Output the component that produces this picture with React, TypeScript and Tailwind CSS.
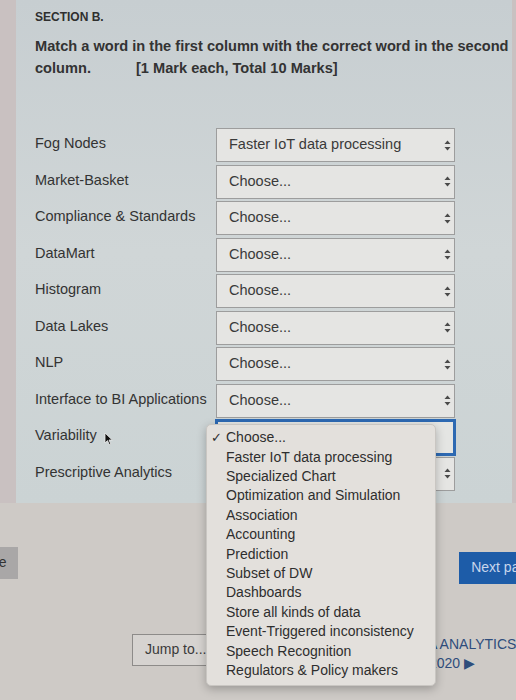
import { ChevronsUpDown } from 'lucide-react';

const ROWS = [
  { label: 'Fog Nodes', value: 'Faster IoT data processing' },
  { label: 'Market-Basket', value: 'Choose...' },
  { label: 'Compliance & Standards', value: 'Choose...' },
  { label: 'DataMart', value: 'Choose...' },
  { label: 'Histogram', value: 'Choose...' },
  { label: 'Data Lakes', value: 'Choose...' },
  { label: 'NLP', value: 'Choose...' },
  { label: 'Interface to BI Applications', value: 'Choose...' },
  { label: 'Variability', value: 'Choose...', focused: true },
  { label: 'Prescriptive Analytics', value: 'Choose...' },
];

const OPTIONS = [
  'Choose...',
  'Faster IoT data processing',
  'Specialized Chart',
  'Optimization and Simulation',
  'Association',
  'Accounting',
  'Prediction',
  'Subset of DW',
  'Dashboards',
  'Store all kinds of data',
  'Event-Triggered inconsistency',
  'Speech Recognition',
  'Regulators & Policy makers',
];

function SelectArrows() {
  return (
    <svg width="7" height="11" viewBox="0 0 7 11" className="shrink-0">
      <path d="M3.5 0.5 L6.5 4 L0.5 4 Z" fill="#4a4a4a" />
      <path d="M3.5 10.5 L6.5 7 L0.5 7 Z" fill="#4a4a4a" />
    </svg>
  );
}

export default function App() {
  return (
    <div
      className="relative h-[700px] w-[516px] overflow-hidden bg-[#cecac6] text-[#333]"
      style={{ fontFamily: '"Liberation Sans", Arial, sans-serif' }}
    >
      <div className="bg-[#c9c1c1]">
        <div className="ml-[16px] w-[496px] bg-gradient-to-b from-[#c7ced1] via-[#d0d6d7] to-[#cbd3d4] px-[19px] pb-[12px] pt-[7px]">
          <p className="text-[12px] font-bold leading-[20px] text-[#2f2f2f]">SECTION B.</p>
          <p className="mt-[8px] whitespace-nowrap text-[14.6px] font-bold leading-[22px] text-[#333]">
            Match a word in the first column with the correct word in the second
            <br />
            <span className="inline-block w-[101px]">column.</span>[1 Mark each, Total 10 Marks]
          </p>

          <div className="mt-[49px] flex flex-col gap-[2.5px]">
            {ROWS.map((row) => (
              <div key={row.label} className="flex items-start">
                <span className="w-[181px] shrink-0 whitespace-nowrap pt-[5px] text-[14.5px] leading-5 text-[#333]">
                  {row.label}
                </span>
                {row.focused ? (
                  <div className="-my-[1.5px] -ml-[1px] flex h-[37px] w-[241px] items-center justify-between border-[3px] border-[#2d69b2] bg-[#e4e5e3] pl-[11px] pr-[4px]" />
                ) : (
                  <div className="flex h-[34px] w-[239px] items-center justify-between border border-[#9d9d9d] bg-[#e5e5e3] pl-[12px] pr-[3px] text-[14.5px] text-[#3a3a3a]">
                    <span className="whitespace-nowrap">{row.value}</span>
                    <SelectArrows />
                  </div>
                )}
              </div>
            ))}
          </div>
        </div>
      </div>

      <div className="mt-[44px] flex items-start">
        <button className="-ml-[95px] h-[32px] shrink-0 bg-[#a9a7a7] pl-[12px] pr-[11px] text-[14px] text-[#333]">
          Previous page
        </button>
        <button className="-mr-[31px] ml-auto mt-[5px] h-[32px] shrink-0 bg-[#1d5ca8] px-[12px] text-[14px] text-[#c8d6ec]">
          Next page
        </button>
      </div>

      <div className="mt-[50px] flex items-start">
        <div className="ml-[132px] flex h-[32px] w-[180px] shrink-0 items-center justify-between border border-[#8d8b89] bg-[#d6d3d0] pl-[12px] pr-[6px] text-[14px] text-[#3a3a3a]">
          <span>Jump to...</span>
          <ChevronsUpDown size={12} />
        </div>
        <div className="ml-[90px] mt-[1px] flex shrink-0 flex-col text-[14px] leading-[19px] text-[#2f4d7c]">
          <span className="whitespace-nowrap">DATA ANALYTICS</span>
          <span className="whitespace-nowrap pl-[27px]">2020 ▶</span>
        </div>
      </div>

      {/* native select popup, open over the Variability field */}
      <div className="absolute left-[206px] top-[424px] w-[230px] rounded-[5px] border border-[#c9c6c2] bg-[#e3e0dc] pb-[5px] pt-[3px] shadow-[0_3px_10px_rgba(0,0,0,0.25)]">
        {OPTIONS.map((opt, i) => (
          <div key={opt} className="flex h-[19.4px] items-center whitespace-nowrap text-[14px] text-[#2e2e2e]">
            <span className="w-[19px] pl-[4px] text-[13px]">{i === 0 ? '✓' : ''}</span>
            <span>{opt}</span>
          </div>
        ))}
      </div>

      {/* mouse pointer */}
      <svg className="absolute left-[104px] top-[432px]" width="9" height="14" viewBox="0 0 9 14">
        <path d="M1 1 L1 11 L3.5 8.6 L5.3 12.6 L6.8 12 L5 8 L8.3 8 Z" fill="#111" stroke="#eee" strokeWidth="0.8" />
      </svg>
    </div>
  );
}
